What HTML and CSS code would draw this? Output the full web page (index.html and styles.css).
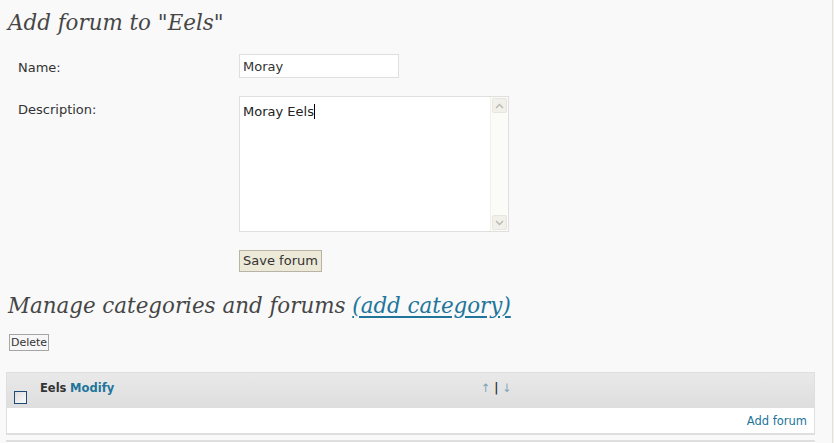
FILE: index.html
```html
<!DOCTYPE html>
<html lang="en">
<head>
    <meta charset="UTF-8">
    <meta name="viewport" content="width=device-width, initial-scale=1.0">
    <title>Forums</title>
    <link rel="stylesheet" href="styles.css">
</head>
<body>
    <div class="page">
        <div class="wrap">
            <h2 class="title">Add forum to "Eels"</h2>
            <form class="forum-form" onsubmit="return false">
                <label class="form-label" for="forum-name">Name:</label>
                <div class="form-field">
                    <input type="text" id="forum-name" class="text-input" value="Moray">
                </div>
                <label class="form-label desc-label">Description:</label>
                <div class="form-field">
                    <div class="textarea-box">
                        <div class="textarea-text">Moray Eels<span class="caret"></span></div>
                        <div class="fake-scroll">
                            <span class="scroll-btn">
                                <svg width="9" height="6" viewBox="0 0 9 6"><path d="M1 5 L4.5 1.5 L8 5" fill="none" stroke="#b8b8ae" stroke-width="1.4"/></svg>
                            </span>
                            <span class="scroll-btn">
                                <svg width="9" height="6" viewBox="0 0 9 6"><path d="M1 1 L4.5 4.5 L8 1" fill="none" stroke="#b8b8ae" stroke-width="1.4"/></svg>
                            </span>
                        </div>
                    </div>
                </div>
                <div></div>
                <div class="form-field">
                    <button type="submit" class="save-btn">Save forum</button>
                </div>
            </form>

            <h2 class="title manage-title">Manage categories and forums <a href="#" class="title-link">(add category)</a></h2>

            <button type="button" class="delete-btn">Delete</button>

            <div class="cat-table">
                <div class="cat-head">
                    <div class="check-col"><span class="check"></span></div>
                    <div class="name-col"><b>Eels</b> <a href="#">Modify</a></div>
                    <div class="order-col"><a href="#">&uarr;</a> <span class="bar">|</span> <a href="#">&darr;</a></div>
                </div>
                <div class="cat-body">
                    <a href="#">Add forum</a>
                </div>
            </div>
            <div class="next-table"></div>
        </div>
        <div class="side-edge"></div>
    </div>
</body>
</html>
```

FILE: styles.css
```css
body {
    margin: 0;
    background-color: #f9f9f9;
    font-family: "DejaVu Sans", Verdana, sans-serif;
    color: #333;
    overflow: hidden;
}

.page {
    display: flex;
    height: 443px;
}

.wrap {
    width: 809px;
    padding-left: 6px;
    padding-right: 17px;
}

.side-edge {
    flex: 1;
    background-color: #f3f1ec;
    border-left: 1px solid #e4e2dc;
}

a {
    color: #21759b;
    text-decoration: none;
}

.title {
    margin: 0;
    padding: 7px 0 0 2px;
    font-family: "DejaVu Serif", Georgia, serif;
    font-style: italic;
    font-weight: normal;
    font-size: 21.4px;
    line-height: 32px;
    color: #464646;
}

.forum-form {
    display: grid;
    grid-template-columns: 231px 1fr;
    row-gap: 18px;
    margin-top: 15px;
    margin-left: 2px;
}

.form-label {
    padding: 6px 0 0 10px;
    font-size: 13px;
    line-height: 16px;
}

.desc-label {
    padding-top: 6px;
}

.text-input {
    box-sizing: border-box;
    width: 160px;
    height: 24px;
    margin: 0;
    padding: 0 3px;
    border: 1px solid #dfdfdf;
    background: #fff;
    font-family: "DejaVu Sans", Verdana, sans-serif;
    font-size: 13px;
    color: #333;
}

.textarea-box {
    box-sizing: border-box;
    display: flex;
    width: 270px;
    height: 136px;
    border: 1px solid #dfdfdf;
    background: #fff;
}

.textarea-text {
    flex: 1;
    padding: 7px 3px;
    font-size: 13px;
    line-height: 16px;
    color: #222;
}

.caret {
    display: inline-block;
    width: 1px;
    height: 15px;
    background: #000;
    vertical-align: -3px;
}

.fake-scroll {
    width: 17px;
    display: flex;
    flex-direction: column;
    justify-content: space-between;
    background: #fbfbf7;
    border-left: 1px solid #f1f1ea;
}

.scroll-btn {
    box-sizing: border-box;
    display: flex;
    align-items: center;
    justify-content: center;
    width: 15px;
    height: 15px;
    margin: 1px;
    background: #f1f0ea;
    border: 1px solid #e6e5de;
    border-radius: 2px;
}

.save-btn {
    box-sizing: border-box;
    width: 83px;
    height: 22px;
    margin: -1px 0 0;
    padding: 0;
    border: 1px solid #b7b4a6;
    background: #ece9d8;
    font-family: "DejaVu Sans", Verdana, sans-serif;
    font-size: 13px;
    color: #333;
}

.manage-title {
    margin-top: 18px;
    padding-top: 0;
}

.title-link {
    color: #21759b;
    text-decoration: underline;
    text-underline-offset: 3px;
}

.delete-btn {
    display: block;
    box-sizing: border-box;
    width: 40px;
    height: 17px;
    margin: 12px 0 0 3px;
    padding: 0;
    border: 1px solid #a5a5a5;
    background: #f7f7f7;
    font-family: "DejaVu Sans", Verdana, sans-serif;
    font-size: 11px;
    color: #333;
}

.cat-table {
    margin-top: 21px;
    border: 1px solid #dfdfdf;
    border-bottom-width: 2px;
    font-size: 11.5px;
}

.cat-head {
    display: flex;
    height: 35px;
    background: linear-gradient(#e9e9e9, #dedede);
}

.check-col {
    width: 33px;
    display: flex;
    align-items: flex-end;
    padding: 0 0 4px 7px;
    box-sizing: border-box;
}

.check {
    box-sizing: border-box;
    width: 13px;
    height: 13px;
    border: 1px solid #1f4a78;
    background: linear-gradient(135deg, #dedede, #fafafa);
}

.name-col {
    width: 441px;
    padding-top: 8px;
}

.name-col b {
    color: #333;
}

.name-col a {
    font-weight: bold;
}

.order-col {
    padding-top: 8px;
    color: #7fa5b8;
}

.order-col a {
    color: #7fa5b8;
}

.order-col .bar {
    font-weight: bold;
    color: #333;
}

.cat-body {
    height: 25px;
    background: #fff;
    text-align: right;
    padding-right: 7px;
    line-height: 26px;
}

.next-table {
    margin-top: 5px;
    border-top: 2px solid #dfdfdf;
    height: 10px;
    background: #fff;
}
```
